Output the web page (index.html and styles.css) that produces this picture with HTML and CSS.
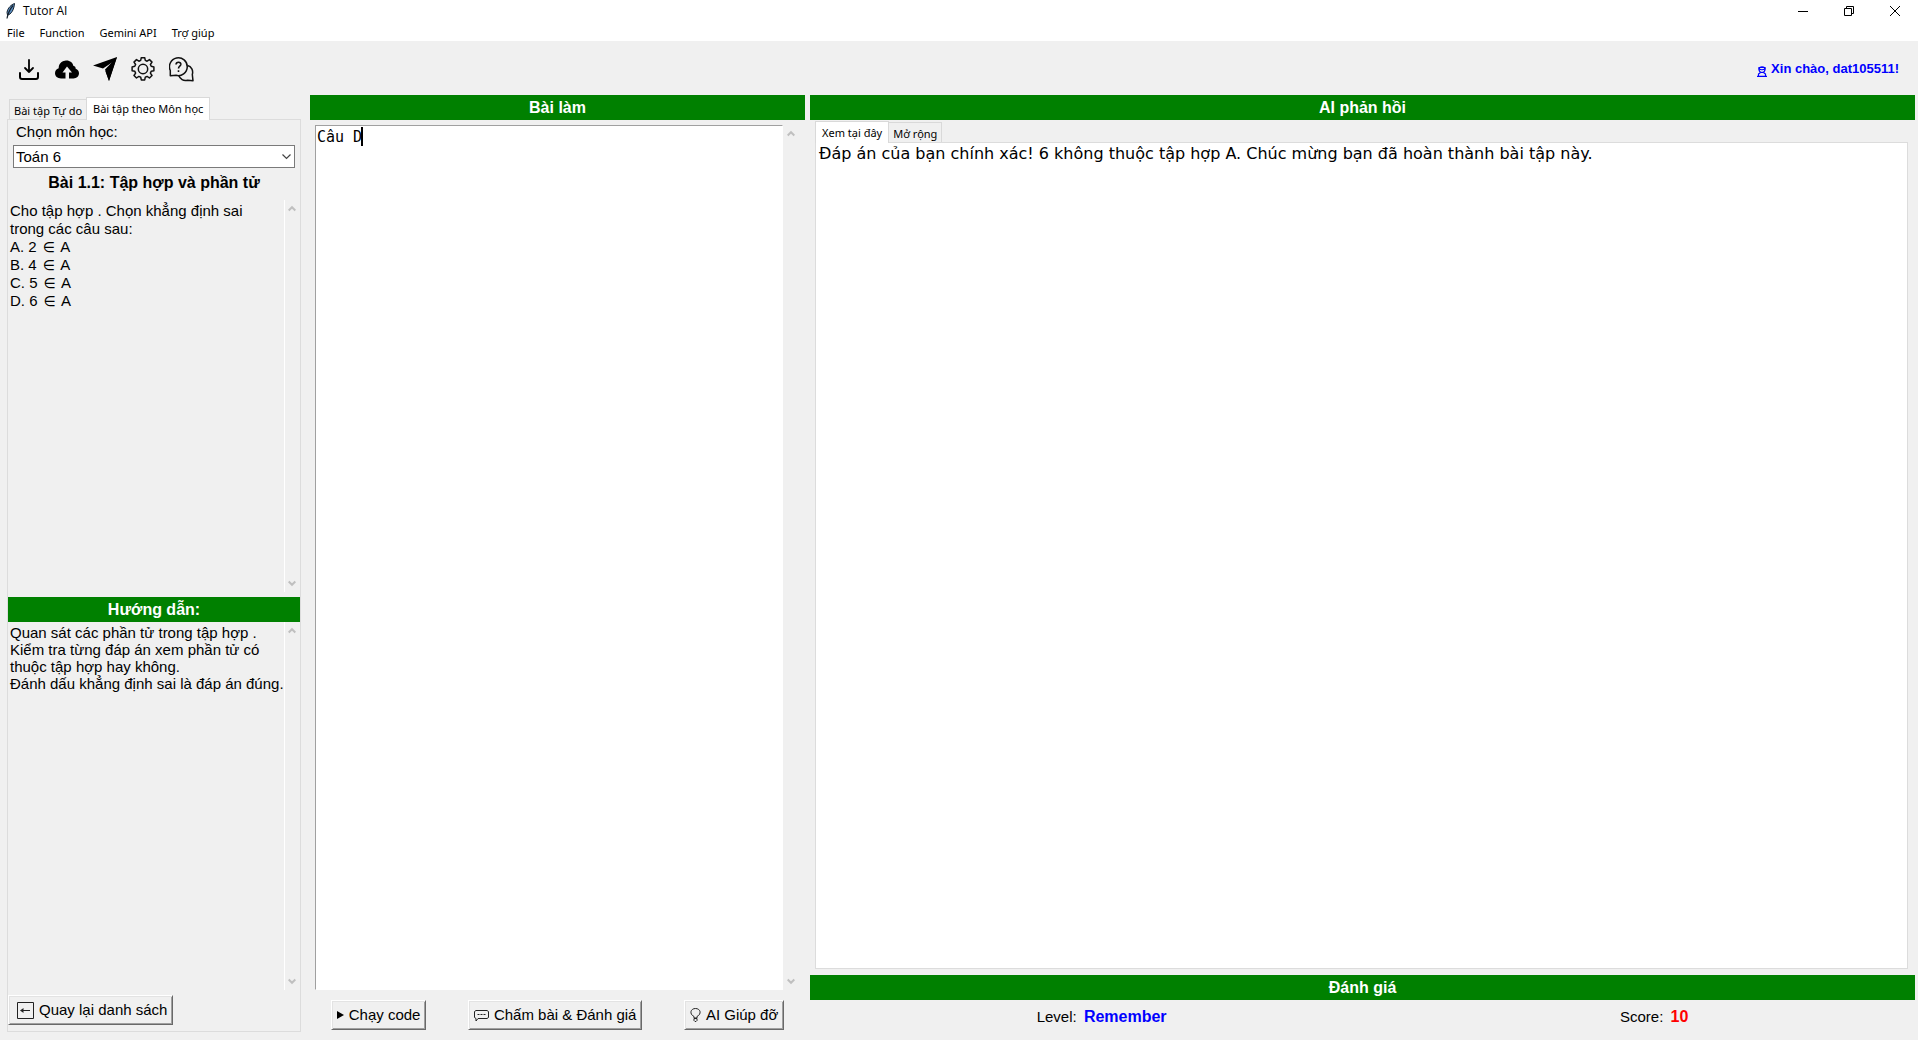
FILE: index.html
```html
<!DOCTYPE html>
<html lang="vi">
<head>
<meta charset="utf-8">
<meta name="viewport" content="width=device-width, initial-scale=1">
<title>Tutor AI</title>
<link rel="stylesheet" href="styles.css">
</head>
<body>
<div class="app">
  <header class="titlebar">
    <svg class="feather" width="16" height="16" viewBox="0 0 16 16" aria-hidden="true">
      <path d="M10.500 0.500C7.500 1.500 3.500 5 3 9.500L3.500 12C7 11.500 10 7 10.500 0.500Z" fill="#5b8fc4" stroke="#16222e" stroke-width="1"/>
      <path d="M9 2.500C6 6 4 10 3 15.500" fill="none" stroke="#16222e" stroke-width="1.200"/>
    </svg>
    <span class="app-name">Tutor AI</span>
    <div class="window-controls">
      <button class="win-btn" aria-label="Minimize"><svg width="12" height="12" viewBox="0 0 12 12"><path d="M1 6.500H11" stroke="#000"/></svg></button>
      <button class="win-btn" aria-label="Restore"><svg width="12" height="12" viewBox="0 0 12 12"><path d="M1.500 3.500h7v7h-7zM3.500 3.500v-2h7v7h-2" fill="none" stroke="#000"/></svg></button>
      <button class="win-btn" aria-label="Close"><svg width="12" height="12" viewBox="0 0 12 12"><path d="M1 1L11 11M11 1L1 11" stroke="#000"/></svg></button>
    </div>
  </header>
  <nav class="menubar">
    <button class="menu">File</button>
    <button class="menu">Function</button>
    <button class="menu">Gemini API</button>
    <button class="menu">Trợ giúp</button>
  </nav>

  <div class="toolbar">
    <div class="tools">
      <button class="tool" aria-label="Download"><svg width="24" height="24" viewBox="0 0 24 24" fill="none" stroke="#000" stroke-width="2" stroke-linecap="round" stroke-linejoin="round"><path d="M12 3v12M8 11l4 4 4-4" stroke-width="1.800"/><path d="M3 16v4a2 2 0 0 0 2 2h14a2 2 0 0 0 2-2v-4"/></svg></button>
      <button class="tool" aria-label="Upload"><svg width="24" height="24" viewBox="0 0 24 24"><path d="M6 21.500C2.500 21.500 0 19.200 0 16.300C0 13.900 1.500 12 3.700 11.300C3.500 7.500 6.200 4 10 3.700C11 3.500 12.500 3.300 14 3.900C16.500 4.600 18 6.500 18.300 8.700C20 9 20.700 10.200 20.700 11.700C22.800 12.300 24 14.200 24 16.300C24 19.200 21.600 21.500 18.500 21.500H14V15.500H17L12 9.500L7.500 15.500H10.500V21.500Z" fill="#000"/></svg></button>
      <button class="tool" aria-label="Send"><svg width="24" height="24" viewBox="0 0 24 24"><path d="M24 0L16 24L12.500 14.500L19 5.500L10 11.500L0 8.500Z" fill="#000"/><path d="M24 0L12 12.500L16 24Z" fill="#000"/></svg></button>
      <button class="tool" aria-label="Settings"><svg width="24" height="24" viewBox="0 0 24 24" fill="none" stroke="#111" stroke-width="1.500" stroke-linejoin="round"><path d="M10.300 .7h3.400l.6 2.700 1.800.8 2.400-1.600 2.500 2.500-1.600 2.400.8 1.800 2.700.6v3.800l-2.700.6-.8 1.800 1.600 2.400-2.500 2.500-2.400-1.600-1.800.8-.6 2.700h-3.400l-.6-2.700-1.800-.8-2.400 1.600L3 18.500l1.600-2.400-.8-1.800-2.700-.6V9.900l2.700-.6.8-1.800L3 5.100l2.500-2.500 2.400 1.600 1.800-.8z"/><circle cx="12" cy="12" r="4.700"/></svg></button>
      <button class="tool" aria-label="Help"><svg width="25" height="25" viewBox="0 0 25 25" fill="none" stroke="#111" stroke-width="1.500" stroke-linejoin="round"><path d="M1.300 18.700V13.500A8.900 8.900 0 1 1 7 18.300Z"/><path d="M18.500 8.500C22.500 9.500 24.500 13.500 23.300 17.500L24 23.700L18.500 23.200C14.500 24.500 11 22 9.800 18.500"/><path d="M7 7.500C7.200 4.300 12.300 4.500 11.800 7.700C11.500 9.300 9.500 9.300 9.500 11.500M9.500 13.200V15" stroke-width="1.600"/></svg></button>
    </div>
    <a class="user" href="#"><svg width="10" height="11" viewBox="0 0 10 11" fill="none" stroke="#00f" stroke-width="1.200"><path d="M2 3.500C2 0 8 0 8 3.500C8 7.500 2 7.500 2 3.500Z"/><path d="M2 3C4 4 6 4 8 3V1.500H2ZM1.500 10V8L3.500 6.500M8.500 10V8L6.500 6.500M0 10.300H10"/></svg><span>Xin chào, dat105511!</span></a>
  </div>

  <main class="workspace">
    <section class="column exercise">
      <div class="tabs" role="tablist">
        <button class="tab" role="tab" aria-selected="false">Bài tập Tự do</button>
        <button class="tab active" role="tab" aria-selected="true">Bài tập theo Môn học</button>
      </div>
      <div class="panel">
        <label class="subject-label" for="subject">Chọn môn học:</label>
        <div class="combo">
          <select id="subject"><option>Toán 6</option></select>
          <svg class="combo-arrow" width="9" height="6" viewBox="0 0 9 6" aria-hidden="true"><path d="M.5 .5L4.500 4.500L8.500 .5" fill="none" stroke="#444" stroke-width="1.200"/></svg>
        </div>
        <h2 class="lesson">Bài 1.1: Tập hợp và phần tử</h2>
        <div class="scroll-text question">
          <p>Cho tập hợp . Chọn khẳng định sai trong các câu sau:<br>A. 2 <span class="in">∈</span> A<br>B. 4 <span class="in">∈</span> A<br>C. 5 <span class="in">∈</span> A<br>D. 6 <span class="in">∈</span> A</p>
          <div class="scrollbar lined">
            <svg width="8" height="7" viewBox="0 0 8 7"><path d="M.7 5.500L4 2.200L7.300 5.500"/></svg>
            <svg width="8" height="7" viewBox="0 0 8 7"><path d="M.7 1.500L4 4.800L7.300 1.500"/></svg>
          </div>
        </div>
        <h2 class="bar">Hướng dẫn:</h2>
        <div class="scroll-text hint">
          <p>Quan sát các phần tử trong tập hợp .<br>Kiểm tra từng đáp án xem phần tử có thuộc tập hợp hay không.<br>Đánh dấu khẳng định sai là đáp án đúng.</p>
          <div class="scrollbar lined">
            <svg width="8" height="7" viewBox="0 0 8 7"><path d="M.7 5.500L4 2.200L7.300 5.500"/></svg>
            <svg width="8" height="7" viewBox="0 0 8 7"><path d="M.7 1.500L4 4.800L7.300 1.500"/></svg>
          </div>
        </div>
        <button class="btn back"><svg width="17" height="17" viewBox="0 0 17 17" fill="none" stroke="#222"><path d="M.5 .5h16v16H.5z"/><path d="M4 8.500h9"/><path d="M3 8.500L6.500 6v5z" fill="#222" stroke="none"/></svg>Quay lại danh sách</button>
      </div>
    </section>

    <section class="column work">
      <h2 class="bar">Bài làm</h2>
      <div class="editor">
        <textarea class="answer" aria-label="Bài làm" spellcheck="false">Câu D</textarea>
        <span class="caret"></span>
        <div class="scrollbar">
          <svg width="8" height="7" viewBox="0 0 8 7"><path d="M.7 5.500L4 2.200L7.300 5.500"/></svg>
          <svg width="8" height="7" viewBox="0 0 8 7"><path d="M.7 1.500L4 4.800L7.300 1.500"/></svg>
        </div>
      </div>
      <div class="actions">
        <button class="btn"><svg width="7" height="8" viewBox="0 0 7 8"><path d="M0 0L7 4L0 8Z" fill="#000"/></svg>Chạy code</button>
        <button class="btn"><svg width="15" height="13" viewBox="0 0 15 13" fill="none" stroke="#222"><path d="M2 1.500h11l1.500 1v6l-1.500 1H4L2 12V9.500L.5 8.500v-6z"/><path d="M3.500 5.500h2M6.500 5.500h2M9.500 5.500h2"/></svg>Chấm bài &amp; Đánh giá</button>
        <button class="btn"><svg width="11" height="14" viewBox="0 0 11 14" fill="none" stroke="#222"><path d="M4 10V8.500C-1 6 .5 .5 5.500 .5S12 6 7 8.500V10z"/><path d="M4 10.500h3v2L6 13.500H5L4 12.500z"/></svg>AI Giúp đỡ</button>
      </div>
    </section>

    <section class="column feedback">
      <h2 class="bar">AI phản hồi</h2>
      <div class="notebook">
        <div class="tabs" role="tablist">
          <button class="tab active" role="tab" aria-selected="true">Xem tại đây</button>
          <button class="tab" role="tab" aria-selected="false">Mở rộng</button>
        </div>
        <div class="reply">Đáp án của bạn chính xác! 6 không thuộc tập hợp A. Chúc mừng bạn đã hoàn thành bài tập này.</div>
      </div>
      <h2 class="bar">Đánh giá</h2>
      <div class="rating">
        <span>Level: <b class="level">Remember</b></span>
        <span>Score: <b class="score">10</b></span>
      </div>
    </section>
  </main>
</div>
</body>
</html>
```
FILE: styles.css
```css
* { box-sizing: border-box; }

body {
  margin: 0;
  background: #f0f0f0;
  color: #000;
  font: 15px/18px "Liberation Sans", Arial, sans-serif;
}

button {
  margin: 0;
  padding: 0;
  border: 0;
  background: none;
  color: inherit;
  font: inherit;
}

h2, p { margin: 0; }

svg { flex: none; }

.app {
  display: flex;
  flex-direction: column;
  min-height: 100vh;
}

/* window chrome */
.titlebar { font: 12px/16px "Open Sans", "Noto Sans", sans-serif; }

.menubar, .tab { font: 11px/16px "Noto Sans", "Open Sans", sans-serif; }

.titlebar {
  display: flex;
  align-items: center;
  height: 22px;
  padding-left: 4px;
  background: #fff;
}

.app-name { margin-left: 3px; }

.window-controls {
  display: flex;
  margin-left: auto;
}

.win-btn {
  display: flex;
  align-items: center;
  justify-content: center;
  width: 46px;
  height: 20px;
}

.menubar {
  display: flex;
  align-items: flex-start;
  gap: 15px;
  height: 19px;
  padding: 3px 7px 0;
  background: #fff;
}

.toolbar {
  display: flex;
  align-items: center;
  justify-content: space-between;
  height: 54px;
  padding: 2px 19px 0 17px;
}

.tools {
  display: flex;
  gap: 14px;
}

.tool {
  display: flex;
  width: 24px;
  height: 24px;
}

.user {
  display: flex;
  align-items: center;
  gap: 4px;
  color: #00f;
  font-size: 13px;
  font-weight: bold;
  text-decoration: none;
}

.user svg { margin-top: 5px; }

/* three panes */
.workspace {
  display: grid;
  flex: 1;
  grid-template-columns: 294fr 509fr 1105fr;
  padding: 0 3px 0 7px;
}

.column {
  display: flex;
  flex-direction: column;
  min-width: 0;
}

.work { padding: 0 5px 0 9px; }
.exercise { padding-bottom: 8px; }

.bar {
  height: 25px;
  background: #008000;
  color: #fff;
  font-size: 16px;
  line-height: 25px;
  text-align: center;
}

/* tabs */
.tabs {
  display: flex;
  align-items: flex-end;
  height: 24px;
  padding-left: 2px;
}

.tab {
  height: 20px;
  padding: 2px 4px 0;
  border: 1px solid #d9d9d9;
  border-bottom: 0;
  white-space: nowrap;
}

.tab.active {
  z-index: 1;
  height: 23px;
  margin-bottom: -1px;
  padding: 0 6px;
  background: #fff;
}

.tab:not(.active):first-child { border-right: 0; }
.tab.active + .tab { border-left: 0; }

/* exercise pane */
.panel {
  display: flex;
  flex: 1;
  flex-direction: column;
  padding-bottom: 6px;
  border: 1px solid #dcdcdc;
}

.subject-label { padding: 3px 8px 4px; }

.combo {
  position: relative;
  margin: 0 5px;
}

.combo select {
  display: block;
  width: 100%;
  height: 23px;
  padding: 0 2px;
  border: 1px solid #7a7a7a;
  border-radius: 0;
  background: #fff;
  appearance: none;
  color: #000;
  font: inherit;
}

.combo-arrow {
  position: absolute;
  top: 9px;
  right: 4px;
  pointer-events: none;
}

.lesson {
  padding: 6px 0 8px;
  font-size: 16px;
  line-height: 18px;
  text-align: center;
}

.scroll-text {
  display: flex;
  flex: 392 0 0;
  justify-content: space-between;
}

.scroll-text p { padding: 2px 0 0 2px; }

.question { margin-bottom: 5px; }
.question p { padding-right: 16px; }

.hint {
  flex-grow: 368;
  line-height: 17px;
}

.in {
  display: inline-block;
  width: 16px;
  font: 14px/16px "DejaVu Sans", sans-serif;
  text-align: center;
}

.scrollbar {
  display: flex;
  flex: none;
  flex-direction: column;
  align-items: center;
  justify-content: space-between;
  width: 16px;
  padding: 5px 0;
}

.scrollbar.lined {
  padding-right: 2px;
  border-left: 1px solid #fff;
}

.scrollbar path {
  fill: none;
  stroke: #bfbfbf;
  stroke-width: 2;
}

/* raised buttons */
.btn {
  display: flex;
  align-items: center;
  gap: 5px;
  height: 30px;
  padding: 0 5px;
  border: 1px solid;
  border-color: #fff #696969 #696969 #fff;
  box-shadow: inset 1px 1px #e3e3e3, inset -1px -1px #a0a0a0;
  white-space: nowrap;
}

.btn.back {
  align-self: flex-start;
  margin-top: 5px;
  padding: 0 5px 0 8px;
}

/* editor pane */
.editor {
  position: relative;
  display: flex;
  flex: 1;
  padding: 5px 6px 0 5px;
}

.answer {
  flex: 1;
  min-width: 0;
  padding: 2px 1px;
  border: 1px solid;
  border-color: #a0a0a0 #fff #fff #a0a0a0;
  outline: 0;
  background: #fff;
  color: #000;
  font: 15px/18px "DejaVu Sans Mono", monospace;
  resize: none;
}

.caret {
  position: absolute;
  top: 7px;
  left: 51px;
  width: 2px;
  height: 19px;
  background: #000;
}

.actions {
  display: flex;
  justify-content: space-around;
  padding: 10px 0;
}

/* feedback pane */
.notebook {
  display: flex;
  flex: 1;
  flex-direction: column;
  padding: 0 7px 6px 5px;
}

.notebook .tabs {
  height: 22px;
  padding-left: 0;
}

.notebook .tab.active { height: 22px; }

.reply {
  flex: 1;
  padding: 0 3px;
  border: 1px solid #dcdcdc;
  background: #fff;
  font: 16px/22px "DejaVu Sans", Verdana, sans-serif;
}

.rating {
  display: flex;
  justify-content: space-around;
  height: 40px;
  line-height: 34px;
}

.rating b {
  margin-left: 3px;
  font-size: 16px;
}

.level { color: #00f; }
.score { color: #f00; }
```
